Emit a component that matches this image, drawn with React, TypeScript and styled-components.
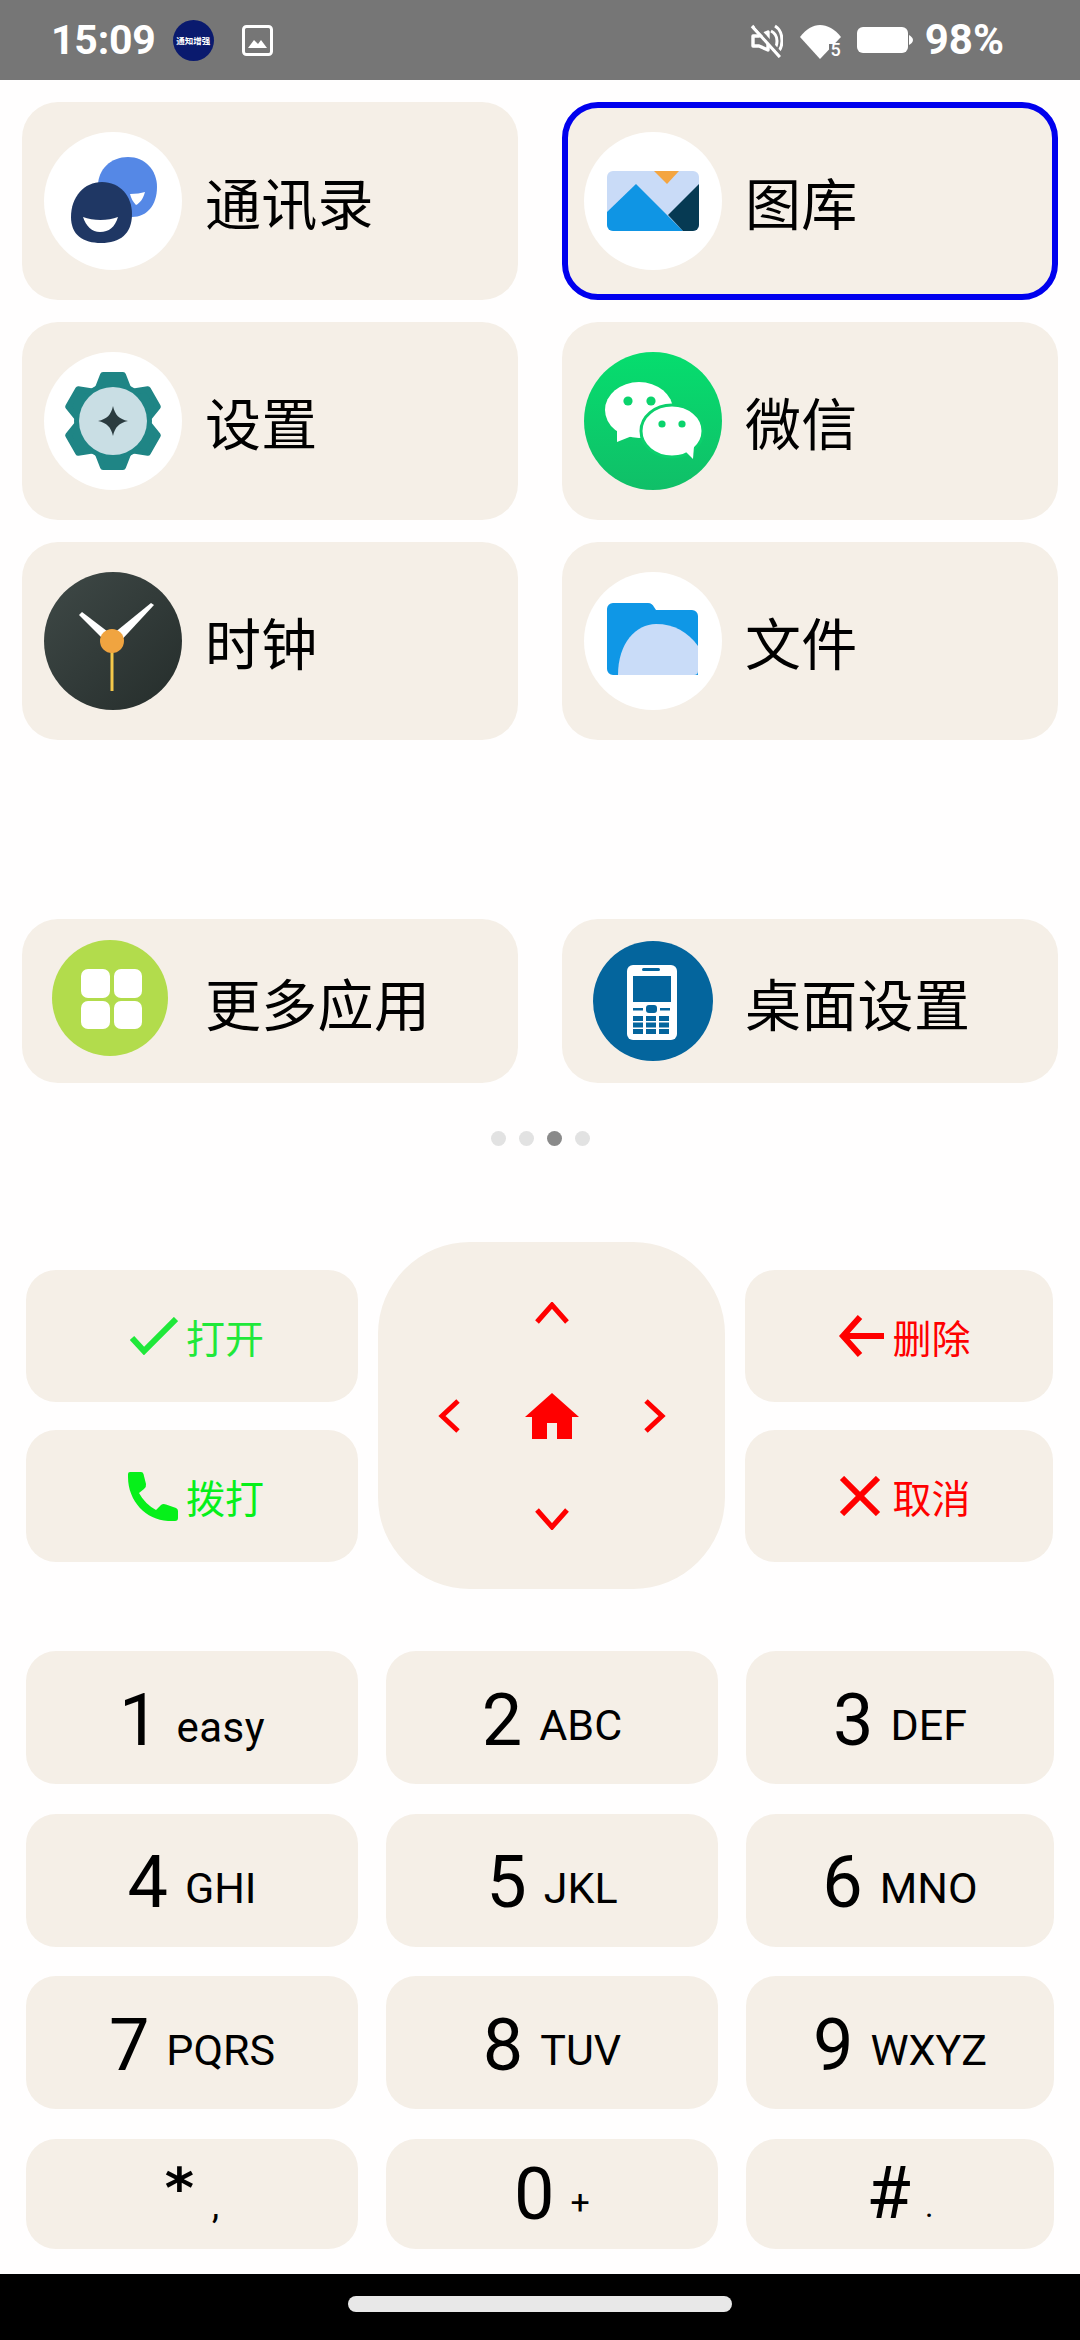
import React from "react";
import styled, { createGlobalStyle } from "styled-components";

const CJK = `"Noto Sans CJK SC", "Noto Sans", sans-serif`;
const LATIN = `Roboto, "Noto Sans CJK SC", sans-serif`;
const CREAM = "#f5efe7";

const Global = createGlobalStyle`
  html, body { margin: 0; padding: 0; background: #fff; }
  * { box-sizing: border-box; }
`;

const Page = styled.div`
  width: 1080px;
  height: 2340px;
  display: flex;
  flex-direction: column;
  background: #fffefe;
  overflow: hidden;
`;

const StatusBar = styled.header`
  height: 80px;
  flex: none;
  background: #767676;
  color: #fff;
  display: flex;
  align-items: center;
  justify-content: space-between;
  padding: 0 76px 0 51px;
  font-family: ${LATIN};
  font-weight: 700;
  font-size: 41px;
`;
const StatusGroup = styled.div`
  display: flex;
  align-items: center;
`;
const Time = styled.span`
  line-height: 1;
  letter-spacing: -0.2px;
`;
const Badge = styled.span`
  width: 41px;
  height: 41px;
  margin: 0 0 0 17px;
  border-radius: 50%;
  background: #0a1a6e;
  color: #fff;
  display: flex;
  align-items: center;
  justify-content: center;
  font-family: ${CJK};
  font-size: 8.5px;
  font-weight: 700;
  white-space: nowrap;
`;
const Percent = styled.span`
  line-height: 1;
  margin-left: 12px;
  font-size: 42px;
`;
const StatusIcon = styled.svg<{ $left: number }>`
  display: block;
  flex: none;
  margin-left: ${(p) => p.$left}px;
`;
const WifiSlot = styled.div`
  position: relative;
  flex: none;
  margin-left: 16px;
  width: 44px;
  height: 36px;
`;
const WifiLevel = styled.span`
  position: absolute;
  right: 2px;
  bottom: -1px;
  font-size: 18px;
  font-weight: 500;
  line-height: 18px;
`;

const AppGrid = styled.section`
  display: grid;
  grid-template-columns: 496px 496px;
  column-gap: 44px;
  row-gap: 22px;
  padding: 22px 22px 0;
`;
const AppCard = styled.div<{ $selected?: boolean; $short?: boolean }>`
  height: ${(p) => (p.$short ? 164 : 198)}px;
  background: ${CREAM};
  border-radius: 36px;
  display: flex;
  align-items: center;
  padding-left: ${(p) => (p.$selected ? 16 : 22)}px;
  border: ${(p) => (p.$selected ? "6px solid #0000ee" : "none")};
`;
const AppIcon = styled.svg`
  width: 138px;
  height: 138px;
  flex: none;
  display: block;
`;
const AppLabel = styled.span<{ $drop?: number }>`
  margin-left: 23px;
  padding-top: ${(p) => p.$drop ?? 0}px;
  font-family: ${CJK};
  font-size: 56px;
  letter-spacing: 0.3px;
  color: #000;
  line-height: 1;
`;
const ShortGrid = styled(AppGrid)`
  padding-top: 179px;
`;

const Dots = styled.div`
  display: flex;
  justify-content: center;
  gap: 13px;
  margin: 48px 0 0;
`;
const Dot = styled.span<{ $on?: boolean }>`
  width: 15px;
  height: 15px;
  border-radius: 50%;
  background: ${(p) => (p.$on ? "#8a8a8a" : "#e2e2e2")};
`;

const Controls = styled.section`
  display: grid;
  grid-template-columns: 332px 347px 308px;
  column-gap: 20px;
  align-items: center;
  margin: 96px 0 0;
  padding: 0 26px;
`;
const SideColumn = styled.div`
  display: flex;
  flex-direction: column;
  gap: 28px;
`;
const ActionButton = styled.div<{ $color: string; $nudge: number }>`
  height: 132px;
  background: ${CREAM};
  border-radius: 30px;
  display: flex;
  align-items: center;
  justify-content: center;
  gap: 8px;
  padding-left: ${(p) => p.$nudge}px;
  color: ${(p) => p.$color};
  font-family: ${CJK};
  font-size: 39px;
  line-height: 1;
`;
const ActionText = styled.span`
  padding-top: 1px;
`;
const DPad = styled.div`
  height: 347px;
  background: ${CREAM};
  border-radius: 92px;
  display: grid;
  grid-template-columns: repeat(3, 103px);
  grid-template-rows: repeat(3, 103px);
  justify-content: center;
  align-content: center;
  justify-items: center;
  align-items: center;
`;
const PadIcon = styled.svg<{ $col: number; $row: number }>`
  display: block;
  grid-column: ${(p) => p.$col};
  grid-row: ${(p) => p.$row};
`;

const Keypad = styled.section`
  display: grid;
  grid-template-columns: 332px 332px 308px;
  grid-template-rows: 133px 133px 133px 110px;
  column-gap: 28px;
  row-gap: 29.5px;
  margin: 62px 0 0;
  padding: 0 26px;
`;
const Key = styled.div<{ $drop?: number }>`
  background: ${CREAM};
  border-radius: 30px;
  display: flex;
  align-items: center;
  justify-content: center;
  padding-top: ${(p) => p.$drop ?? 6}px;
  color: #000;
  font-family: ${LATIN};
`;
const Digit = styled.span`
  font-size: 72px;
  font-weight: 400;
  line-height: 1;
`;
const Letters = styled.span`
  font-size: 43px;
  font-weight: 400;
  margin-left: 17px;
  line-height: 1;
  position: relative;
  top: 5px;
`;
const Lower = styled(Letters)`
  font-size: 42px;
  letter-spacing: 0.5px;
  top: 7px;
`;
const Asterisk = styled.span`
  font-family: "DejaVu Sans", sans-serif;
  font-size: 56px;
  font-weight: 700;
  line-height: 1;
  position: relative;
  top: -6px;
`;
const Hash = styled.span`
  font-size: 72px;
  font-weight: 400;
  line-height: 1;
`;
const SmallMark = styled.span<{ $top: number; $left: number; $size: number }>`
  font-size: ${(p) => p.$size}px;
  font-weight: 400;
  line-height: 1;
  margin-left: ${(p) => p.$left}px;
  position: relative;
  top: ${(p) => p.$top}px;
`;

const NavBar = styled.footer`
  margin-top: auto;
  height: 66px;
  flex: none;
  background: #000;
  display: flex;
  justify-content: center;
  padding-top: 22px;
`;
const HomeBar = styled.div`
  width: 384px;
  height: 16px;
  border-radius: 8px;
  background: #e8e8e8;
`;

const Contacts = () => (
  <AppIcon viewBox="0 0 138 138">
    <circle cx="69" cy="69" r="69" fill="#fff" />
    <path d="M84 25c17 0 29 13 29 30 0 18-10 30-25 30-18 0-34-12-34-31 0-17 13-29 30-29z" fill="#5588e6" />
    <path d="M86 62c6 0 11-1 15-2-2 7-5 11-9 13-3-3-5-7-6-11z" fill="#fff" />
    <path d="M58 50c18 0 30 14 30 32 0 20-12 29-31 29-18 0-30-8-30-26 0-20 13-35 31-35z" fill="#1f3764" />
    <path d="M39 85c10 4 25 4 35 0-3 10-9 15-18 15-8 0-14-6-17-15z" fill="#fff" />
  </AppIcon>
);
const Gallery = () => (
  <AppIcon viewBox="0 0 138 138">
    <circle cx="69" cy="69" r="69" fill="#fff" />
    <rect x="23" y="39" width="92" height="60" rx="6" fill="#c9dbf7" />
    <path d="M70 39h25L83 52z" fill="#f4a540" />
    <path d="M23 80 52 52 99 99H29a6 6 0 0 1-6-6z" fill="#0f95e4" />
    <path d="M115 52v41a6 6 0 0 1-6 6H99L84 83z" fill="#063a53" />
  </AppIcon>
);
const Settings = () => (
  <AppIcon viewBox="0 0 138 138">
    <circle cx="69" cy="69" r="69" fill="#fff" />
    <g transform="translate(69 69)" fill="#1f8585" stroke="#1f8585" strokeWidth="6" strokeLinejoin="round">
      <circle r="36" />
      {[0, 60, 120, 180, 240, 300].map((a) => (
        <path key={a} d="M-10 -46H10L17 -28H-17Z" transform={`rotate(${a})`} />
      ))}
    </g>
    <circle cx="69" cy="69" r="34" fill="#c9dee4" />
    <path d="M69 54c2 9 6 13 15 15-9 2-13 6-15 15-2-9-6-13-15-15 9-2 13-6 15-15z" fill="#2a3b3f" />
  </AppIcon>
);
const WeChat = () => (
  <AppIcon viewBox="0 0 138 138">
    <defs>
      <linearGradient id="wx" x1="0" y1="0" x2="0" y2="1">
        <stop offset="0" stopColor="#06dd6e" />
        <stop offset="1" stopColor="#10bf68" />
      </linearGradient>
    </defs>
    <circle cx="69" cy="69" r="69" fill="url(#wx)" />
    <ellipse cx="55" cy="58" rx="34" ry="28" fill="#fff" />
    <path d="M33 78 33 90 48 84z" fill="#fff" />
    <ellipse cx="88" cy="79" rx="31" ry="26" fill="#fff" stroke="#0cd06c" strokeWidth="3" />
    <path d="M100 98 109 107 110 94z" fill="#fff" />
    <circle cx="44" cy="49" r="4.6" fill="#0ad36c" />
    <circle cx="67" cy="49" r="4.6" fill="#0ad36c" />
    <circle cx="78" cy="72" r="3.6" fill="#0ad36c" />
    <circle cx="98" cy="72" r="3.6" fill="#0ad36c" />
  </AppIcon>
);
const Clock = () => (
  <AppIcon viewBox="0 0 138 138">
    <defs>
      <linearGradient id="ck" x1="0" y1="0" x2="1" y2="1">
        <stop offset="0" stopColor="#3f4947" />
        <stop offset="1" stopColor="#252d2b" />
      </linearGradient>
    </defs>
    <circle cx="69" cy="69" r="69" fill="url(#ck)" />
    <path d="M35 43 38 40 72 66 66 74z" fill="#fff" />
    <path d="M110 33 107 31 64 66 72 74z" fill="#fff" />
    <rect x="66.5" y="69" width="3" height="50" fill="#f4c84a" />
    <circle cx="68" cy="69" r="12" fill="#f0a440" />
  </AppIcon>
);
const Files = () => (
  <AppIcon viewBox="0 0 138 138">
    <circle cx="69" cy="69" r="69" fill="#fff" />
    <path d="M29 31h35c3 0 5 2 6 4l2 3h36a6 6 0 0 1 6 6v59H29a6 6 0 0 1-6-6V37a6 6 0 0 1 6-6z" fill="#0f97e6" />
    <path d="M34 103c0-32 18-51 38-51 18 0 32 8 42 22v25a4 4 0 0 1-4 4z" fill="#c9dcf8" />
  </AppIcon>
);
const MoreApps = () => (
  <AppIcon viewBox="0 0 138 138">
    <circle cx="66" cy="66" r="58" fill="#b2dc4c" />
    <rect x="37" y="37" width="29" height="29" rx="7" fill="#fff" />
    <rect x="70" y="37" width="28" height="29" rx="7" fill="#fff" />
    <rect x="37" y="69" width="29" height="28" rx="7" fill="#fff" />
    <rect x="70" y="69" width="28" height="28" rx="7" fill="#fff" />
  </AppIcon>
);
const Handset = () => (
  <AppIcon viewBox="0 0 138 138">
    <circle cx="69" cy="69" r="60" fill="#04659d" />
    <rect x="43" y="33" width="50" height="75" rx="6" fill="#fff" />
    <rect x="58" y="36" width="18" height="3" rx="1.5" fill="#04659d" />
    <rect x="49" y="44" width="38" height="26" fill="#04659d" />
    <rect x="62" y="73" width="11" height="8" rx="3" fill="#04659d" />
    <rect x="49" y="76" width="10" height="2.5" fill="#04659d" />
    <rect x="76" y="76" width="10" height="2.5" fill="#04659d" />
    {[84, 90.5, 97].map((y) =>
      [49, 62, 75].map((x) => <rect key={`${x}-${y}`} x={x} y={y} width="10" height="5" fill="#04659d" />)
    )}
  </AppIcon>
);

const Chevron = ({ d, w, h, col, row }: { d: string; w: number; h: number; col: number; row: number }) => (
  <PadIcon $col={col} $row={row} width={w} height={h} viewBox={`0 0 ${w} ${h}`}>
    <path d={d} fill="none" stroke="#f00" strokeWidth="5" />
  </PadIcon>
);

const keys: [string, string][] = [
  ["2", "ABC"],
  ["3", "DEF"],
  ["4", "GHI"],
  ["5", "JKL"],
  ["6", "MNO"],
  ["7", "PQRS"],
  ["8", "TUV"],
  ["9", "WXYZ"],
];

export default function App() {
  return (
    <Page>
      <Global />
      <StatusBar>
        <StatusGroup>
          <Time>15:09</Time>
          <Badge>通知增强</Badge>
          <StatusIcon $left={28} width="31" height="31" viewBox="0 0 31 31">
            <rect x="1.5" y="1.5" width="28" height="28" rx="3" fill="none" stroke="#fff" strokeWidth="3" />
            <path d="M6 23l6-8 4 4 3-4 6 8z" fill="#fff" />
          </StatusIcon>
        </StatusGroup>
        <StatusGroup>
          <StatusIcon $left={0} width="33" height="35" viewBox="0 0 33 35">
            <path d="M3 13h6l9-4v18l-9-4H3z" fill="none" stroke="#fff" strokeWidth="3.4" strokeLinejoin="round" />
            <path d="M21 8c4 2 6 6 6 10s-1 7-4 10M25 3c5 3 7 9 7 15 0 4-1 7-3 10" fill="none" stroke="#fff" strokeWidth="3" />
            <path d="M2 3l28 31" stroke="#fff" strokeWidth="3.4" />
            <path d="M6 3l28 31" stroke="#767676" strokeWidth="3" />
          </StatusIcon>
          <WifiSlot>
            <svg width="44" height="36" viewBox="0 0 44 36">
              <path d="M1 13C7 5 14 1 21 1s15 4 21 12L21 35z" fill="#fff" />
              <rect x="30" y="20" width="14" height="16" fill="#767676" />
            </svg>
            <WifiLevel>5</WifiLevel>
          </WifiSlot>
          <StatusIcon $left={14} width="56" height="26" viewBox="0 0 56 26">
            <rect x="0" y="0" width="51" height="26" rx="6" fill="#fff" />
            <path d="M52 8c2 1 4 3 4 5s-2 4-4 5z" fill="#fff" />
          </StatusIcon>
          <Percent>98%</Percent>
        </StatusGroup>
      </StatusBar>

      <AppGrid>
        <AppCard><Contacts /><AppLabel>通讯录</AppLabel></AppCard>
        <AppCard $selected><Gallery /><AppLabel>图库</AppLabel></AppCard>
        <AppCard><Settings /><AppLabel>设置</AppLabel></AppCard>
        <AppCard><WeChat /><AppLabel>微信</AppLabel></AppCard>
        <AppCard><Clock /><AppLabel>时钟</AppLabel></AppCard>
        <AppCard><Files /><AppLabel>文件</AppLabel></AppCard>
      </AppGrid>

      <ShortGrid>
        <AppCard $short><MoreApps /><AppLabel $drop={2}>更多应用</AppLabel></AppCard>
        <AppCard $short><Handset /><AppLabel $drop={2}>桌面设置</AppLabel></AppCard>
      </ShortGrid>

      <Dots>
        <Dot /><Dot /><Dot $on /><Dot />
      </Dots>

      <Controls>
        <SideColumn>
          <ActionButton $color="#1fe83a" $nudge={10}>
            <svg width="48" height="38" viewBox="0 0 48 38">
              <path d="M2 21 14 34 46 2" fill="none" stroke="#1fe83a" strokeWidth="6" />
            </svg>
            <ActionText>打开</ActionText>
          </ActionButton>
          <ActionButton $color="#06f01a" $nudge={8}>
            <svg width="50" height="50" viewBox="0 0 50 50">
              <path d="M2 1H13Q15 1 15.5 3L18 13Q18.5 16 16 18L11 22Q17 33 28 39L33 34Q35 32.5 38 33.5L48 37Q50 38 50 40V47Q50 50 47 50H40C18 49 0 30 0 6V3Q0 1 2 1Z" fill="#06f01a" />
            </svg>
            <ActionText>拨打</ActionText>
          </ActionButton>
        </SideColumn>
        <DPad>
          <Chevron col={2} row={1} w={34} h={22} d="M2 20 17 3l15 17" />
          <Chevron col={1} row={2} w={22} h={34} d="M20 2 4 17l16 15" />
          <PadIcon $col={2} $row={2} width="54" height="46" viewBox="0 0 54 46">
            <path d="M27 0 54 24H47V46H32V30H22V46H7V24H0z" fill="#f00" />
          </PadIcon>
          <Chevron col={3} row={2} w={22} h={34} d="M2 2 18 17 2 32" />
          <Chevron col={2} row={3} w={34} h={22} d="M2 2 17 19 32 2" />
        </DPad>
        <SideColumn>
          <ActionButton $color="#f00" $nudge={11}>
            <svg width="46" height="44" viewBox="0 0 46 44">
              <path d="M22 3 5 22l17 19M6 22h40" fill="none" stroke="#f00" strokeWidth="6" />
            </svg>
            <ActionText>删除</ActionText>
          </ActionButton>
          <ActionButton $color="#f00" $nudge={11}>
            <svg width="46" height="40" viewBox="0 0 46 40">
              <path d="M4 2 40 38M40 2 4 38" fill="none" stroke="#f00" strokeWidth="6" />
            </svg>
            <ActionText>取消</ActionText>
          </ActionButton>
        </SideColumn>
      </Controls>

      <Keypad>
        <Key><Digit>1</Digit><Lower>easy</Lower></Key>
        {keys.map(([d, l]) => (
          <Key key={d}><Digit>{d}</Digit><Letters>{l}</Letters></Key>
        ))}
        <Key $drop={0}><Asterisk>*</Asterisk><SmallMark $size={36} $top={12} $left={18}>,</SmallMark></Key>
        <Key $drop={3}><Digit>0</Digit><SmallMark $size={34} $top={7} $left={16}>+</SmallMark></Key>
        <Key $drop={0}><Hash>#</Hash><SmallMark $size={32} $top={12} $left={14}>.</SmallMark></Key>
      </Keypad>

      <NavBar><HomeBar /></NavBar>
    </Page>
  );
}
